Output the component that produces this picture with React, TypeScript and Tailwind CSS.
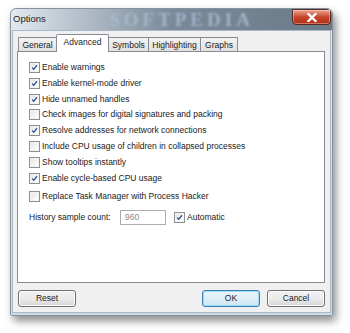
import React from "react";

function Check({ checked }: { checked: boolean }) {
  return (
    <div className="w-[11px] h-[11px] border border-[#8e8f8f] bg-gradient-to-br from-[#dcdcdc] to-[#fbfbfb] flex items-center justify-center shrink-0">
      <div className="w-[9px] h-[9px] border border-[#f4f4f4] bg-gradient-to-br from-[#e6e6e6] to-[#ffffff] flex items-center justify-center">
        {checked && (
          <svg width="9" height="9" viewBox="0 0 9 9">
            <path d="M1.5 4.6 L3.5 6.8 L7.6 1.6" fill="none" stroke="#2b4a8c" strokeWidth="1.6" />
          </svg>
        )}
      </div>
    </div>
  );
}

function Row({ checked, label, h }: { checked: boolean; label: string; h: string }) {
  return (
    <div className={`flex items-center gap-[2px] ${h}`}>
      <Check checked={checked} />
      <span className="leading-none whitespace-nowrap">{label}</span>
    </div>
  );
}

function Btn({ label, focus }: { label: string; focus?: boolean }) {
  return (
    <div
      className={`w-[58px] h-[17px] rounded-[3px] flex items-center justify-center border ${
        focus
          ? "border-[#3c7fb1] bg-gradient-to-b from-[#eaf6fd] via-[#e0eef8] to-[#cde4f3] shadow-[inset_0_0_0_1px_#9fdcf7]"
          : "border-[#707070] bg-gradient-to-b from-[#f2f2f2] via-[#ebebeb] to-[#d6d6d6] shadow-[inset_0_0_0_1px_#fbfbfb]"
      }`}
    >
      <span className="leading-none">{label}</span>
    </div>
  );
}

export default function App() {
  const tabs = ["General", "Advanced", "Symbols", "Highlighting", "Graphs"];
  const widths = ["w-[39px]", "w-[53px]", "w-[41px]", "w-[53px]", "w-[38px]"];
  return (
    <div
      className="w-[350px] h-[333px] bg-white overflow-hidden pt-[8px] pl-[10px] text-[8.5px] text-[#1a1a1a]"
      style={{ fontFamily: '"Liberation Sans", Arial, sans-serif' }}
    >
      <div className="w-[323px] h-[308px] rounded-t-[6px] rounded-b-[2px] border border-[#8593a1] bg-gradient-to-b from-[#dde5ec] to-[#cfdbe7] shadow-[3px_5px_8px_rgba(0,0,0,0.45)] flex flex-col">
        {/* title bar */}
        <div className="h-[21px] relative flex items-center rounded-t-[6px] bg-gradient-to-r from-[#e3e9ef] via-[#7a8a99] to-[#6b7a88] overflow-hidden">
          <div className="absolute left-[60px] right-[40px] top-0 bottom-0 flex items-center justify-center">
            <span
              className="text-[19px] font-bold tracking-[4px] text-[#a9bfd6] blur-[1px] opacity-80 leading-none"
              style={{ fontFamily: '"Liberation Serif", serif' }}
            >
              SOFTPEDIA
            </span>
          </div>
          <span className="relative ml-[2px] text-[9.5px] text-[#1c1c1c]">Options</span>
          <div className="absolute right-[1px] top-0 w-[39px] h-[16px] rounded-b-[4px] border border-[#5a2a20] bg-gradient-to-b from-[#e8a493] via-[#c7452b] to-[#b43016] flex items-center justify-center shadow-[inset_0_0_0_1px_rgba(255,255,255,0.35)]">
            <svg width="10" height="9" viewBox="0 0 10 9">
              <path d="M1.5 1 L8.5 8 M8.5 1 L1.5 8" stroke="#ffffff" strokeWidth="2.4" strokeLinecap="square" />
            </svg>
          </div>
        </div>
        {/* client */}
        <div className="mx-[1px] mb-[2px] flex-1 bg-[#f0f0f0] border border-[#a9b9c8] pt-[4px] pl-[4px] pr-[5px] flex flex-col">
          <div className="flex items-end h-[17px] pl-[1px]">
            {tabs.map((t, i) => {
              const sel = i === 1;
              return (
                <div
                  key={t}
                  className={`${widths[i]} flex items-center justify-center border border-[#898c95] border-b-0 ${
                    i > 0 ? "-ml-[1px]" : ""
                  } ${
                    sel
                      ? "h-[18px] bg-white relative z-10 rounded-t-[2px] pb-[2px]"
                      : "h-[15px] bg-gradient-to-b from-[#f2f2f2] to-[#e0e0e0]"
                  }`}
                >
                  <span className="leading-none whitespace-nowrap">{t}</span>
                </div>
              );
            })}
          </div>
          <div className="h-[232px] bg-white border border-[#898c95] -mt-[1px] pl-[11px] pt-[7px] flex flex-col">
            <Row checked label="Enable warnings" h="h-[16px]" />
            <Row checked label="Enable kernel-mode driver" h="h-[16px]" />
            <Row checked label="Hide unnamed handles" h="h-[16px]" />
            <Row checked={false} label="Check images for digital signatures and packing" h="h-[15px]" />
            <Row checked label="Resolve addresses for network connections" h="h-[16px]" />
            <Row checked={false} label="Include CPU usage of children in collapsed processes" h="h-[16px]" />
            <Row checked={false} label="Show tooltips instantly" h="h-[16px]" />
            <Row checked label="Enable cycle-based CPU usage" h="h-[16px]" />
            <div className="h-[2px]" />
            <Row checked={false} label="Replace Task Manager with Process Hacker" h="h-[16px]" />
            <div className="flex items-center h-[17px] mt-[5px]">
              <span className="w-[91px] leading-none whitespace-nowrap">History sample count:</span>
              <div className="w-[46px] h-[15px] border border-[#abadb3] bg-white flex items-center pl-[4px] text-[#8a8a8a]">
                <span className="leading-none">960</span>
              </div>
              <div className="ml-[8px] flex items-center gap-[2px]">
                <Check checked />
                <span className="leading-none">Automatic</span>
              </div>
            </div>
          </div>
          <div className="flex items-center mt-[7px] pl-[1px]">
            <Btn label="Reset" />
            <div className="flex-1" />
            <Btn label="OK" focus />
            <div className="w-[7px]" />
            <Btn label="Cancel" />
          </div>
        </div>
      </div>
    </div>
  );
}
